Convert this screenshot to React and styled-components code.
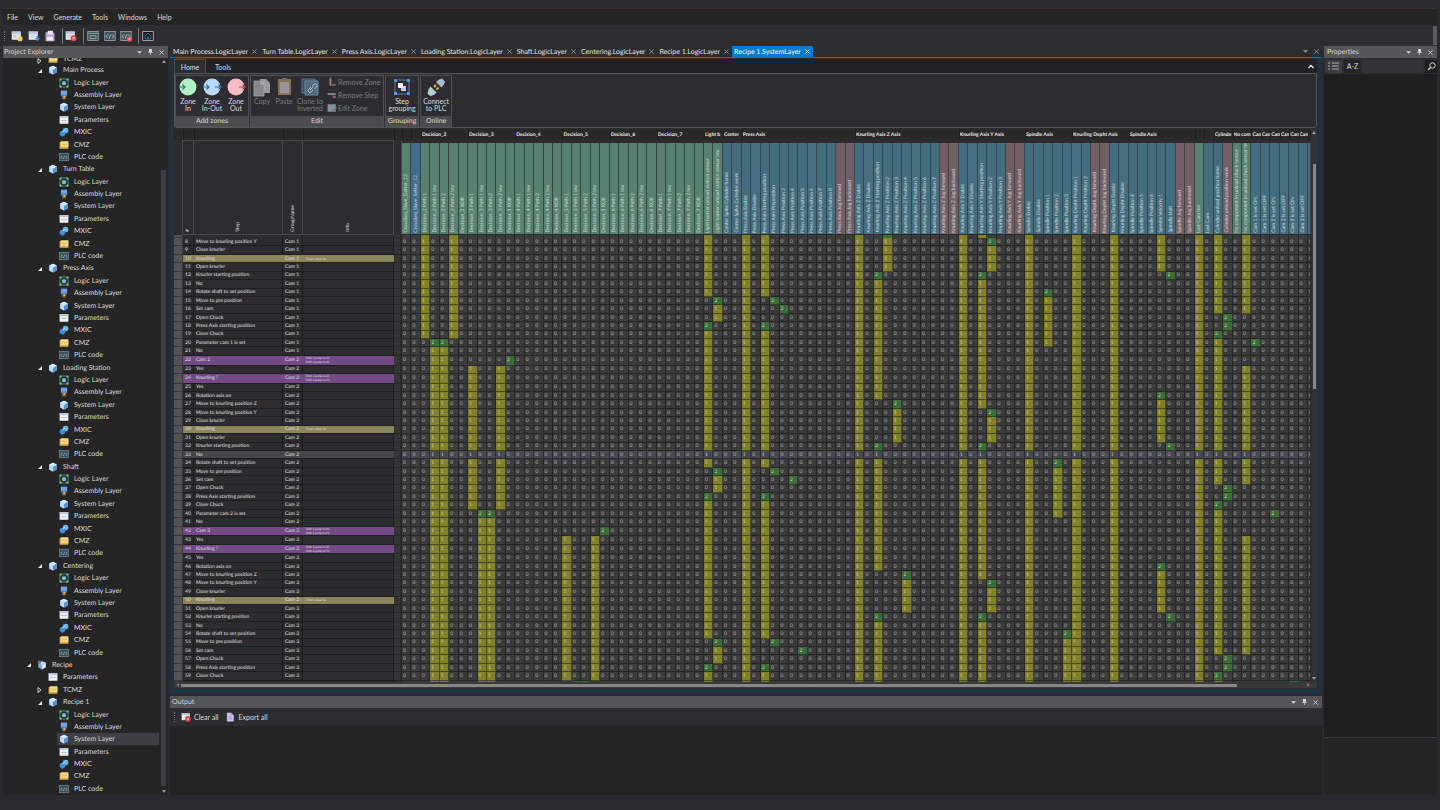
import React from "react";
import styled, { createGlobalStyle } from "styled-components";

const Global = createGlobalStyle`
  * { box-sizing: border-box; }
  html, body { margin: 0; background: #2a2b2e; }
  body {
    font-family: Lato, "Open Sans", sans-serif;
    font-size: 7px;
    line-height: 8px;
    color: #dcdcdc;
    text-rendering: geometricPrecision;
  }
  button { font: inherit; color: inherit; background: none; border: 0; padding: 0; margin: 0; }
  ul { list-style: none; margin: 0; padding: 0; }
  svg { display: block; flex: none; }
`;

/* ---------- data ---------- */

const GREEN = "#57826f";
const BLUE = "#436e82";
const MAUVE = "#725f66";

const decision = (n) =>
  ["Path 1", "Path 1 Inv", "Path 2", "Path 2 Inv", "XOR"].map((s) => [`Decision_${n} ${s}`, GREEN]);
const prefixed = (prefix, names, colour) => names.map((n) => [`${prefix} ${n}`, colour]);
const jog = (prefix, word) => prefixed(prefix, [`${word} forward`, `${word} backward`], MAUVE);

const columns = [
  ["CrossSeq_Slave_Getter_12", GREEN],
  ["CrossSeq_Slave_Setter_12", "#416b8c"],
  ...[2, 3, 4, 5, 6, 7].flatMap(decision),
  ["Light barrier unload station sensor", GREEN],
  ["Light barrier unload station sensor Inv", GREEN],
  ["Center Spike Cylinder home", BLUE],
  ["Center Spike Cylinder work", BLUE],
  ...prefixed("Press Axis", ["Enable", "Disable", "Starting position", "Preposition", "Position 3", "Position 4", "Position 5", "Position 6", "Position 7", "Position 8"], BLUE),
  ...jog("Press Axis", "Jog"),
  ...prefixed("Knurling Axis Z", ["Enable", "Disable", "Starting position", "Position 2", "Position 3", "Position 4", "Position 5", "Position 6", "Position 7"], BLUE),
  ...jog("Knurling Axis Z", "Jog"),
  ...prefixed("Knurling Axis Y", ["Enable", "Disable", "Starting position", "Position 2", "Position 3"], BLUE),
  ...jog("Knurling Axis Y", "Jog"),
  ...prefixed("Spindle", ["Enable", "Disable", "Position 1", "Position 2", "Position 3"], BLUE),
  ...prefixed("Knurling Depht", ["Position 1", "Position 2"], BLUE),
  ...jog("Knurling Depht", "Jog"),
  ...prefixed("Knurling Depht", ["Enable", "Disable"], BLUE),
  ...prefixed("Spindle", ["Position 4", "Position 5", "Position 6", "Velocity 1", "Halt"], BLUE),
  ...jog("Spindle", "Jog"),
  ["Last Cam Inv", GREEN],
  ["Last Cam", BLUE],
  ["Cylinder unload position home", BLUE],
  ["Cylinder unload position work", MAUVE],
  ["No component in unload chuck sensor", GREEN],
  ["No component in unload chuck sensor Inv", GREEN],
  ...[1, 2, 3].flatMap((n) => prefixed(`Cam ${n} is set`, ["ON", "OFF"], BLUE)),
  ["", BLUE],
];

const groups = [
  ["", 1], ["", 1],
  ["Decision_2", 5], ["Decision_3", 5], ["Decision_4", 5], ["Decision_5", 5], ["Decision_6", 5], ["Decision_7", 5],
  ["Light b", 2], ["Center", 2], ["Press Axis", 12], ["Knurling Axis Z Axis", 11], ["Knurling Axis Y Axis", 7],
  ["Spindle Axis", 5], ["Knurling Depht Axis", 6], ["Spindle Axis", 7], ["", 1], ["", 1],
  ["Cylinde", 2], ["No com", 2], ["Cam", 1], ["Cam", 1], ["Cam", 1], ["Cam", 1], ["Cam", 1], ["Cam", 1], ["", 1],
];

/* column -> ranges of steps in which the output stays on */
const held = {
  2: [[7, 19]], 3: [[21, 60]], 4: [[21, 60]], 5: [[7, 19]],
  7: [[23, 39]], 8: [[41, 60]], 9: [[41, 60]], 10: [[23, 39]],
  17: [[43, 59]], 20: [[43, 59]],
  32: [[7, 14], [19, 34], [39, 54], [59, 60]],
  33: [[16, 17], [36, 37], [56, 57]],
  36: [[7, 60]],
  38: [[7, 14], [19, 34], [39, 54], [59, 60]],
  48: [[7, 60]],
  50: [[13, 26], [33, 46], [53, 60]],
  51: [[8, 11]], 52: [[28, 31]], 53: [[48, 51]],
  59: [[7, 60]],
  61: [[7, 7], [13, 27], [33, 47], [53, 60]],
  62: [[9, 11], [29, 31], [49, 51]],
  66: [[7, 60]],
  68: [[15, 20]], 69: [[35, 40]], 70: [[55, 60]],
  71: [[7, 60]], 75: [[7, 60]],
  80: [[7, 11], [27, 31], [47, 51]],
  84: [[7, 60]],
  86: [[7, 16], [20, 36], [40, 56], [60, 60]],
  89: [[7, 16], [23, 36], [43, 56]],
};

/* column -> steps in which the output is triggered */
const fired = {
  3: [20], 4: [20], 8: [40], 9: [40], 11: [22], 18: [60], 19: [60], 21: [42],
  32: [18, 38, 58], 33: [15, 35, 55], 38: [18, 38, 58], 39: [15, 35, 55],
  40: [16], 41: [36], 42: [56],
  50: [12, 32, 52], 51: [7], 52: [27], 53: [47],
  61: [12, 32, 52], 62: [8, 28, 48],
  68: [14], 69: [34], 70: [54], 80: [26, 46], 81: [12, 32, 52],
  86: [19, 39, 59], 87: [17, 18, 37, 38, 57, 58],
  90: [20], 92: [40], 94: [60],
};

const valueAt = (col, step) => {
  if (fired[col]?.includes(step)) return 2;
  return held[col]?.some(([a, b]) => step >= a && step <= b) ? 1 : 0;
};

const cycle = [
  "No", "Cam", "Yes", "Knurling ?", "Yes", "Rotation axis on", "Move to knurling position Z",
  "Move to knurling position Y", "Close knurler", "Knurling", "Open knurler", "Knurler starting position",
  "No", "Rotate shaft to set position", "Move to pre position", "Set cam", "Open Chuck",
  "Press Axis starting position", "Close Chuck", "Parameter cam",
];
const jumps = {
  22: ["Path 1 jump to 23", "Path 2 jump to 41"],
  24: ["Path 1 jump to 25", "Path 2 jump to 33"],
  42: ["Path 1 jump to 43", "Path 2 jump to 61"],
  44: ["Path 1 jump to 45", "Path 2 jump to 53"],
};

const steps = Array.from({ length: 54 }, (_, i) => {
  const id = i + 7;
  const cam = Math.floor((id - 2) / 20) + 1;
  let name = cycle[(id - 1) % 20];
  if (name === "Cam") name = `Cam ${cam}`;
  if (name === "Parameter cam") name = `Parameter cam ${cam} is set`;
  const kind = jumps[id] ? "jump" : name === "Knurling" ? "timer" : id === 33 ? "selected" : "plain";
  const info = jumps[id] || (kind === "timer" ? ["Timer value: 1s"] : []);
  return { id, name, cam: `Cam ${cam}`, kind, info, cut: id === 7 ? 3 : id === 60 ? 1 : 0 };
});

/* ---------- icons ---------- */

const Svg = ({ size = 10, box = 16, children }) => (
  <svg width={size} height={size} viewBox={`0 0 ${box} ${box}`} fill="none" aria-hidden="true">{children}</svg>
);

const treeIcons = {
  cube: (
    <Svg>
      <path d="M8 1 14 4v8l-6 3-6-3V4z" fill="#9cc8f5" />
      <path d="M8 7.500 14 4v8l-6 3z" fill="#5b93d3" />
      <path d="M8 1 14 4 8 7.500 2 4z" fill="#d8ecff" />
      <path d="M2 4 8 7.500V15l-6-3z" fill="#b9dcfb" />
    </Svg>
  ),
  logic: (
    <Svg>
      <rect x="1.500" y="1.500" width="13" height="13" fill="#22362e" stroke="#5f9c78" strokeWidth="1.200" />
      <path d="M1 1h3v3H1zM12 1h3v3h-3zM1 12h3v3H1zM12 12h3v3h-3z" fill="#7fc498" />
      <rect x="5" y="5" width="6" height="6" rx="2" fill="#8fb8ee" />
    </Svg>
  ),
  assembly: (
    <Svg>
      <path d="M3 1h10v9H3z" fill="#6fa4ea" />
      <path d="M3 7h10v3H3z" fill="#4e80c8" />
      <path d="M5 10h6v5H5z" fill="#7d6244" />
      <path d="M7 9h3v4H7z" fill="#e0b060" />
    </Svg>
  ),
  params: (
    <Svg>
      <rect x="1" y="2" width="14" height="12" fill="#eef3fa" />
      <path d="M1 2h14v3H1z" fill="#b9c9e2" />
      <path d="M4 9h3M9 9h3" stroke="#8aa0c4" strokeWidth="1.500" />
    </Svg>
  ),
  mxic: (
    <Svg>
      <circle cx="10.500" cy="5.500" r="4.500" fill="#6db5f7" />
      <circle cx="5.500" cy="10.500" r="4.500" fill="#3f8fe0" />
      <path d="M6 8 9 5.500" stroke="#e6f3ff" strokeWidth="1.500" />
    </Svg>
  ),
  folder: (
    <Svg>
      <path d="M1 3h5l1 1h8v10H1z" fill="#dcae4c" />
      <path d="M3 2h12v9H3z" fill="#f6da8a" />
      <path d="M5 6l4 2 4-2" stroke="#c79c3e" />
    </Svg>
  ),
  code: (
    <Svg>
      <rect x="1" y="2" width="14" height="12" fill="#38505c" stroke="#7d95a3" />
      <path d="M5 6 3 8.500 5 11M11 6l2 2.500L11 11M9 6l-2 5" stroke="#b4c8d4" />
    </Svg>
  ),
  recipe: (
    <Svg>
      <path d="M8 2 14 4.500v7L8 15l-6-3.500v-7z" fill="#7fa9d8" />
      <path d="M8 8 14 4.500v7L8 15z" fill="#d5e4f2" />
      <path d="M8 2 14 4.500 8 8 5 6z" fill="#bcd8f4" />
      <path d="M2 1h4v5H2z" fill="#8d6f56" />
    </Svg>
  ),
};

const Win = ({ children }) => (
  <Svg size={12}>
    <rect x="1" y="2" width="12" height="11" fill="#e8edf4" />
    <path d="M1 2h12v3H1z" fill="#b7c6da" />
    <path d="M3 7h6M3 9.500h5" stroke="#a9b6c8" />
    {children}
  </Svg>
);
const Frame = ({ children }) => (
  <Svg size={12}>
    <rect x="1" y="2" width="14" height="12" fill="#42525b" stroke="#9cb0bb" />
    {children}
  </Svg>
);
const chev = <path d="M5 6 3 8.500 5 11M11 6l2 2.500L11 11M9 6l-2 5" stroke="#d8e6ee" />;

const toolbar = [
  { label: "New project", icon: <Win><circle cx="12" cy="11.500" r="3.500" fill="#f1cf6d" /></Win> },
  { label: "Open project", icon: <Win><path d="M11 8h3v3h2l-3.500 4L9 11h2z" fill="#3c95ea" /></Win> },
  { label: "Save", icon: (
    <Svg size={12}>
      <path d="M2 3h10l2 2v10H2z" fill="#bda5dc" />
      <path d="M5 1h7v5H5z" fill="#e9def7" />
      <path d="M4 9h8v5H4z" fill="#f2ebfb" />
    </Svg>
  ), end: true },
  { label: "Close project", icon: <Win><circle cx="11.500" cy="11" r="4" fill="#e0464b" /><path d="m10 9.500 3 3m0-3-3 3" stroke="#fff" /></Win>, end: true },
  { label: "Generate layer", icon: <Frame><path d="M1 4.500h14" stroke="#9cb0bb" /><path d="M4 7.500h8v4H4z" stroke="#9ec7a6" /></Frame> },
  { label: "Generate code", icon: <Frame>{chev}</Frame> },
  { label: "Remove code", icon: <Frame>{chev}<circle cx="12.500" cy="12" r="3.500" fill="#e0565b" /><path d="M11 12h3" stroke="#fff" /></Frame>, end: true },
  { label: "Start page", icon: (
    <Svg size={12}>
      <rect x="1" y="2" width="14" height="12" fill="#15181b" stroke="#c9c9c9" />
      <path d="m4 8 4-4 4 4v4H4z" stroke="#3f86ad" />
      <path d="M7 12V9h2v3" stroke="#3f86ad" />
    </Svg>
  ) },
];

const Zone = ({ fill, left, right }) => (
  <Svg size={20} box={20}>
    <circle cx="10" cy="10" r="8.500" fill={fill} />
    {left && <path d="M1 10h6M4.500 7.500 7 10 4.500 12.500" stroke={left === "in" ? "#2f7d55" : "#2d66a3"} strokeWidth="1.200" />}
    {right && <path d="M13 10h6M16.500 7.500 19 10l-2.500 2.500" stroke={right === "out" ? "#a33b45" : "#2d66a3"} strokeWidth="1.200" />}
  </Svg>
);

const CopyIcon = (
  <Svg size={20} box={20}>
    <path d="M8 2h6l4 4v10H8z" fill="#999b9f" />
    <path d="M2 4h7l3 3v12H2z" fill="#85878b" stroke="#a9abb0" strokeWidth=".8" />
    <path d="M9 4v3h3" stroke="#c0c2c6" strokeWidth=".8" />
  </Svg>
);
const PasteIcon = (
  <Svg size={20} box={20}>
    <path d="M4 2h13v16H4z" fill="#8f7148" />
    <path d="M6 5h9v11H6z" fill="#96979b" />
    <path d="M8 1h5v3H8z" fill="#6c6e72" />
  </Svg>
);
const CloneIcon = (
  <Svg size={20} box={20}>
    <path d="M2 2h13v14H2z" fill="#3d5063" stroke="#5b7791" />
    <path d="M5 4h13v14H5z" fill="#53687c" stroke="#6d8aa5" />
    <path d="m10 13 3.500-3.500M11 10l-2.300 2.300a1.800 1.800 0 0 0 2.600 2.600L13 13M12 9l1.800-1.600a1.800 1.800 0 0 1 2.600 2.600L14.500 12" stroke="#b2c2d0" />
  </Svg>
);
const GroupIcon = (
  <Svg size={20} box={20}>
    <rect x="3" y="3" width="14" height="14" stroke="#6d8fb8" strokeWidth=".8" />
    <path d="M2 2h3v3H2zM15 2h3v3h-3zM2 15h3v3H2zM15 15h3v3h-3z" fill="#4f93ef" />
    <path d="M9 9h5v5H9z" fill="#d2c3ec" />
    <path d="M6 6h5v5H6z" fill="#f4f7fb" />
  </Svg>
);
const PlugIcon = (
  <Svg size={20} box={20}>
    <path d="M10 5l3-2.500 3-1 3 3-1 3-2.500 3z" fill="#a9bccb" />
    <path d="M4.500 9.500l6 6-2.500 2.500-4 1-2.500-2.500 1-4z" fill="#b9cad7" />
    <path d="m8 10 2-2M10.500 12.500l2-2" stroke="#e6b93f" strokeWidth="1.800" />
  </Svg>
);
const RemoveZoneIcon = (
  <Svg>
    <path d="M4 1h3v13H4z" fill="#85878a" />
    <path d="M7 11h7v3H7z" fill="#94545a" />
  </Svg>
);
const RemoveStepIcon = (
  <Svg>
    <path d="M1 5h13v3H1z" fill="#85878a" />
    <path d="M9 9h5v4H9z" fill="#94545a" />
  </Svg>
);
const EditZoneIcon = (
  <Svg>
    <path d="M1 2h13v12H1z" fill="#8b9196" />
    <path d="M8 13l6-7 2 2-6 6z" fill="#5f7c98" />
  </Svg>
);

const Chevron = () => (
  <svg width="5" height="5" viewBox="0 0 6 6" aria-hidden="true"><path d="M0 1.500h6L3 4.500z" fill="currentColor" /></svg>
);
const Pin = () => (
  <svg width="5" height="6" viewBox="0 0 6 8" aria-hidden="true"><path d="M1 0h4v4h1v1H3.500v3h-1V5H0V4h1z" fill="currentColor" /></svg>
);
const Cross = () => (
  <svg width="5" height="5" viewBox="0 0 6 6" aria-hidden="true"><path d="m.5.5 5 5m0-5-5 5" stroke="currentColor" fill="none" /></svg>
);

/* ---------- shell ---------- */

const Page = styled.div`
  height: 100vh;
  display: flex;
  flex-direction: column;
  background: #2a2b2e;
  padding: 8px 3px 15px 3px;
`;
const MenuBar = styled.nav`
  flex: none;
  display: flex;
  align-items: center;
  gap: 10px;
  height: 17px;
  padding-left: 4px;
  background: #252526;
  border-top: 1px solid #3b2f2f;
`;
const ToolBar = styled.div`
  flex: none;
  display: flex;
  align-items: center;
  height: 21px;
  padding-left: 1px;
  background: #2d2d30;
`;
const Grip = styled.span`
  width: 2px;
  height: 10px;
  margin-right: 2px;
  border-left: 1px dotted #77787b;
`;
const ToolButton = styled.button`
  display: flex;
  align-items: center;
  justify-content: center;
  width: ${(p) => (p.$end ? 21 : 17)}px;
  height: 16px;
  padding-right: ${(p) => (p.$end ? 4 : 0)}px;
  border-right: ${(p) => (p.$end ? "1px solid #77787b" : "0")};
`;
const Spacer = styled.span`
  flex: 1;
`;
const Overflow = styled.span`
  width: 4px;
  height: 19px;
  background: #5a5b5d;
`;
const Main = styled.main`
  flex: 1;
  min-height: 0;
  display: grid;
  grid-template-columns: 165px minmax(0, 1fr) 113px;
  grid-template-rows: minmax(0, 1fr);
  gap: 2px;
`;
const Panel = styled.section`
  display: flex;
  flex-direction: column;
  min-width: 0;
  min-height: 0;
  background: #252526;
`;
const TitleBar = styled.header`
  flex: none;
  display: flex;
  align-items: center;
  gap: 6px;
  height: 12px;
  padding: 0 4px 0 ${(p) => p.$pad || 1}px;
  background: #555658;
  color: #d4d4d4;
`;
const Title = styled.h2`
  flex: 1;
  margin: 0;
  font-size: 7px;
  font-weight: 400;
`;

const PanelTitle = ({ children, pad }) => (
  <TitleBar $pad={pad}>
    <Title>{children}</Title>
    <button aria-label={`${children} options`}><Chevron /></button>
    <button aria-label={`Pin ${children}`}><Pin /></button>
    <button aria-label={`Close ${children}`}><Cross /></button>
  </TitleBar>
);

/* ---------- project explorer ---------- */

const TreeArea = styled.div`
  flex: 1;
  min-height: 0;
  display: flex;
`;
const TreeList = styled.ul`
  flex: 1;
  min-width: 0;
  display: flex;
  flex-direction: column;
`;
const TreeRow = styled.li`
  flex: ${(p) => (p.$cut ? "0 0 6px" : "1 1 0")};
  min-height: 0;
  overflow: hidden;
  display: flex;
  align-items: ${(p) => (p.$cut ? "flex-end" : "center")};
  padding-left: ${(p) => p.$depth * 11 + 12}px;
`;
const TreeItem = styled.span`
  display: flex;
  align-items: center;
  gap: 5px;
  flex: 1;
  align-self: ${(p) => (p.$cut ? "auto" : "stretch")};
  padding-left: 2px;
  background: ${(p) => (p.$selected ? "#3f3f46" : "none")};
`;
const Arrow = styled.span`
  display: flex;
  width: 9px;
`;
const ScrollColumn = styled.div`
  flex: none;
  display: flex;
  flex-direction: column;
  align-items: center;
  width: ${(p) => p.$w || 7}px;
  padding: 2px 0;
  color: #9a9a9a;
  background: ${(p) => p.$bg || "none"};
`;
const ExplorerThumb = styled.span`
  width: 5px;
  height: 84%;
  margin-bottom: 4px;
  background: #3e3e42;
`;
const Tip = ({ up }) => (
  <svg width="4" height="3" viewBox="0 0 4 3" aria-hidden="true"><path d={up ? "M0 3h4L2 0z" : "M0 0h4L2 3z"} fill="currentColor" /></svg>
);
const SideTip = ({ left }) => (
  <svg width="3" height="4" viewBox="0 0 3 4" aria-hidden="true"><path d={left ? "M3 0v4L0 2z" : "M0 0v4l3-2z"} fill="#77787a" /></svg>
);

const layers = [
  ["Logic Layer", "logic"], ["Assembly Layer", "assembly"], ["System Layer", "cube"], ["Parameters", "params"],
  ["MXIC", "mxic"], ["CMZ", "folder"], ["PLC code", "code"],
];
const withLayers = (name, selected) => [
  { name, icon: "cube", depth: 2, open: true },
  ...layers.map(([n, icon]) => ({ name: n, icon, depth: 3, selected: n === selected })),
];
const tree = [
  { name: "TCMZ", icon: "folder", depth: 2, open: false, cut: true },
  ...["Main Process", "Turn Table", "Press Axis", "Loading Station", "Shaft", "Centering"].flatMap((n) => withLayers(n)),
  { name: "Recipe", icon: "recipe", depth: 1, open: true },
  { name: "Parameters", icon: "params", depth: 2 },
  { name: "TCMZ", icon: "folder", depth: 2, open: false },
  ...withLayers("Recipe 1", "System Layer"),
];

const Explorer = () => (
  <Panel aria-label="Project Explorer">
    <PanelTitle>Project Explorer</PanelTitle>
    <TreeArea>
      <TreeList>
        {tree.map((t, i) => (
          <TreeRow key={i} $depth={t.depth} $cut={t.cut}>
            <Arrow>
              {t.open === true && <svg width="5" height="5" viewBox="0 0 5 5" aria-hidden="true"><path d="M5 1v4H1z" fill="#e8e8e8" /></svg>}
              {t.open === false && <svg width="5" height="6" viewBox="0 0 5 6" aria-hidden="true"><path d="M1 .5 4 3 1 5.500z" stroke="#d0d0d0" fill="none" /></svg>}
            </Arrow>
            <TreeItem $selected={t.selected} $cut={t.cut}>
              {treeIcons[t.icon]}
              {t.name}
            </TreeItem>
          </TreeRow>
        ))}
      </TreeList>
      <ScrollColumn $w={9}>
        <Tip up />
        <Spacer />
        <ExplorerThumb />
        <Tip />
      </ScrollColumn>
    </TreeArea>
  </Panel>
);

/* ---------- documents ---------- */

const Centre = styled.div`
  display: flex;
  flex-direction: column;
  min-width: 0;
  min-height: 0;
`;
const TabStrip = styled.div`
  flex: none;
  display: flex;
  align-items: stretch;
  height: 12px;
  padding-left: 1px;
  background: #2d2d30;
  border-bottom: 1px solid #0b73bb;
`;
const Tab = styled.div`
  display: flex;
  align-items: center;
  gap: 4px;
  padding: 0 3px 0 2px;
  color: ${(p) => (p.$active ? "#ffffff" : "#e4e4e4")};
  background: ${(p) => (p.$active ? "#007acc" : "none")};
  white-space: nowrap;
`;
const TabClose = styled.button`
  color: ${(p) => (p.$active ? "#ffffff" : "#a0a0a0")};
`;
const StripTools = styled.div`
  display: flex;
  align-items: center;
  gap: 6px;
  padding-right: 3px;
  color: #9a9a9a;
`;
const DocFrame = styled.div`
  flex: 1;
  min-height: 0;
  display: flex;
  flex-direction: column;
  padding: 1px 2px 2px 1px;
  background: #2d2d30;
  border: solid #1d3444;
  border-width: 0 3px 3px 3px;
`;
const RibbonTabs = styled.div`
  flex: none;
  display: flex;
  align-items: stretch;
  height: 14px;
  padding-right: 3px;
  background: #202124;
`;
const RibbonTab = styled.button`
  width: ${(p) => (p.$active ? 32 : 34)}px;
  border: 1px solid ${(p) => (p.$active ? "#4e4f52" : "transparent")};
  border-bottom: 0;
  background: ${(p) => (p.$active ? "#2d2d30" : "none")};
`;
const Ribbon = styled.div`
  flex: none;
  display: flex;
  gap: 1px;
  height: 55px;
  padding-top: 1px;
  border: 1px solid #555659;
  border-radius: 0 0 3px 3px;
  background: #2d2d31;
`;
const RibbonGroup = styled.section`
  display: flex;
  flex-direction: column;
  border: 1px solid #505154;
`;
const GroupBody = styled.div`
  flex: 1;
  display: flex;
  color: ${(p) => (p.$off ? "#7c7d80" : "#dcdcdc")};
`;
const GroupLabel = styled.h3`
  margin: 0;
  height: 10px;
  text-align: center;
  font-size: 7px;
  line-height: 10px;
  font-weight: 400;
  background: #4b4b4d;
`;
const BigButton = styled.button`
  display: flex;
  flex-direction: column;
  align-items: center;
  gap: 1px;
  width: ${(p) => p.$w}px;
  padding-top: 1px;
  line-height: 7px;
  white-space: pre-line;
`;
const SmallList = styled.div`
  display: flex;
  flex-direction: column;
  justify-content: space-between;
  padding: 1px 3px 3px 2px;
`;
const SmallButton = styled.button`
  display: flex;
  align-items: center;
  gap: 1px;
  white-space: nowrap;
`;

/* ---------- step matrix ---------- */

const GridArea = styled.div`
  flex: 1;
  min-height: 0;
  display: flex;
  margin-top: 1px;
`;
const Matrix = styled.table`
  flex: 1;
  min-width: 0;
  display: flex;
  flex-direction: column;
  overflow: hidden;
  font-size: 5px;
  line-height: 6px;
  background: #2f2f31;
`;
const MatrixHead = styled.thead`
  flex: none;
  display: block;
`;
const MatrixBody = styled.tbody`
  flex: 1;
  min-height: 0;
  display: flex;
  flex-direction: column;
`;
const template = "9px 11px 89px 20px 91px 8px repeat(96, minmax(0, 1fr)) 3px";
const GroupRow = styled.tr`
  display: grid;
  grid-template-columns: ${template};
  height: 11px;
  background: #292929;
`;
const GroupCell = styled.th`
  grid-column: span ${(p) => p.$span};
  min-width: 0;
  overflow: hidden;
  padding: 1px 0 0;
  border-left: 1px solid #1f1f1f;
  line-height: 10px;
  text-align: left;
  white-space: nowrap;
  color: #f0f0f0;
`;
const LabelRow = styled.tr`
  display: grid;
  grid-template-columns: ${template};
  height: 95px;
  background: #2c2c2f;
`;
const UpLabel = styled.span`
  writing-mode: vertical-rl;
  transform: rotate(180deg);
  white-space: nowrap;
`;
const StepHead = styled.th`
  display: flex;
  align-items: flex-end;
  justify-content: center;
  padding: 0 0 2px;
  font-weight: 400;
  border: solid #48484a;
  border-width: 1px 1px 1px 0;
`;
const Corner = styled.td`
  padding: 0;
  border-right: 1px solid #48484a;
`;
const OutputHead = styled.th`
  display: flex;
  align-items: flex-end;
  justify-content: center;
  min-width: 0;
  overflow: hidden;
  margin: 3px 0 1px;
  padding: 0 0 1px;
  font-weight: 400;
  color: #d4dcda;
  background: ${(p) => p.$c};
  border-right: 1px solid #3d4446;
`;
const rowBg = { plain: "#2c2c2f", selected: "#474749", timer: "#8b855c", jump: "#734a87" };
const StepRow = styled.tr`
  flex: ${(p) => (p.$cut ? `0 0 ${p.$cut}px` : p.$kind === "jump" ? "8 1 0" : "7 1 0")};
  min-height: 0;
  overflow: hidden;
  display: grid;
  grid-template-columns: ${template};
  grid-template-rows: minmax(0, 1fr);
`;
const RowMark = styled.th`
  padding: 0;
  background: #545456;
  border: solid #39393b;
  border-width: 0 1px 1px 0;
`;
const StepCell = styled.td`
  display: flex;
  flex-direction: column;
  justify-content: center;
  min-width: 0;
  overflow: hidden;
  padding: 0 0 0 2px;
  white-space: nowrap;
  color: #e2e2e2;
  background: ${(p) => rowBg[p.$kind]};
  border: solid #1e1e20;
  border-width: 0 ${(p) => (p.$kind === "plain" ? 1 : 0)}px ${(p) => (p.$cut ? 0 : 1)}px 0;
`;
const InfoCell = styled(StepCell)`
  padding-left: 3px;
  font-size: 3px;
  line-height: 4px;
`;
const GapCell = styled.td`
  padding: 0;
  background: #353536;
  border: solid #29292a;
  border-width: 0 2px 1px 0;
`;
const valueBg = ["#3b3b3b", "#83802a", "#3a6d39"];
const ValueCell = styled.td`
  display: flex;
  align-items: center;
  min-width: 0;
  overflow: hidden;
  padding: 0 0 0 1px;
  color: ${(p) => (p.$v ? "#d8d8b0" : "#bcbcbc")};
  background: ${(p) => (p.$selected ? "#474850" : valueBg[p.$v])};
  border: solid rgba(20, 20, 20, 0.5);
  border-width: 0 1px ${(p) => (p.$cut ? 0 : 1)}px 0;
`;
const MatrixThumb = styled.span`
  width: 3px;
  height: 41%;
  margin-top: 30px;
  background: #88888a;
`;
const HScroll = styled.div`
  flex: none;
  display: flex;
  align-items: center;
  gap: 2px;
  height: 6px;
  padding: 0 7px 0 2px;
  background: #39393a;
`;
const HThumb = styled.span`
  flex: 1;
  height: 3px;
  margin-right: 68px;
  background: #88888a;
`;

const StepMatrix = () => (
  <GridArea>
    <Matrix>
      <MatrixHead>
        <GroupRow>
          {[0, 1, 2, 3, 4, 5].map((k) => <GroupCell key={k} $span={1} />)}
          {groups.map(([name, span], i) => <GroupCell key={`g${i}`} $span={span} scope="colgroup">{name}</GroupCell>)}
        </GroupRow>
        <LabelRow>
          <Corner />
          {["#", "Step", "GroupName", "Info"].map((h) => (
            <StepHead key={h} scope="col"><UpLabel>{h}</UpLabel></StepHead>
          ))}
          <Corner />
          {columns.map(([name, c], i) => (
            <OutputHead key={i} $c={c} scope="col"><UpLabel>{name}</UpLabel></OutputHead>
          ))}
        </LabelRow>
      </MatrixHead>
      <MatrixBody>
        {steps.map((s) => (
          <StepRow key={s.id} $kind={s.kind} $cut={s.cut}>
            <RowMark scope="row" aria-label={`Step ${s.id}`} />
            <StepCell $kind={s.kind} $cut={s.cut}>{s.cut ? "" : s.id}</StepCell>
            <StepCell $kind={s.kind} $cut={s.cut}>{s.cut ? "" : s.name}</StepCell>
            <StepCell $kind={s.kind} $cut={s.cut}>{s.cut ? "" : s.cam}</StepCell>
            <InfoCell $kind={s.kind} $cut={s.cut}>
              {s.info.map((line) => <span key={line}>{line}</span>)}
            </InfoCell>
            <GapCell />
            {columns.map((_, c) => {
              const v = valueAt(c, s.id);
              return (
                <ValueCell key={c} $v={v} $cut={s.cut} $selected={s.kind === "selected"}>{s.cut ? "" : v}</ValueCell>
              );
            })}
          </StepRow>
        ))}
      </MatrixBody>
    </Matrix>
    <ScrollColumn $w={6} $bg="#323234">
      <Tip up />
      <MatrixThumb />
      <Spacer />
      <Tip />
    </ScrollColumn>
  </GridArea>
);

/* ---------- output and properties ---------- */

const OutputPanel = styled.section`
  flex: none;
  display: flex;
  flex-direction: column;
  margin-top: 3px;
  height: 99px;
  background: #232324;
`;
const PanelTools = styled.div`
  flex: none;
  display: flex;
  align-items: center;
  gap: 7px;
  height: 18px;
  padding-left: 4px;
  background: #2d2d30;
`;
const OutputGrip = styled(Grip)`
  margin-right: -2px;
`;
const TextButton = styled.button`
  display: flex;
  align-items: center;
  gap: 3px;
`;
const PropTools = styled.div`
  flex: none;
  display: flex;
  align-items: center;
  gap: 2px;
  height: 16px;
  padding-left: 1px;
  background: #2d2d30;
`;
const PropButton = styled.button`
  display: flex;
  align-items: center;
  justify-content: center;
  width: 17px;
  height: 13px;
  background: ${(p) => (p.$on ? "#3c3c3f" : "#252527")};
`;
const PropFilter = styled.input`
  flex: 1;
  min-width: 0;
  height: 13px;
  padding: 0 2px;
  border: 0;
  font: inherit;
  color: inherit;
  background: #343436;
`;
const PropSearch = styled.button`
  display: flex;
  align-items: center;
  justify-content: center;
  width: 12px;
  height: 13px;
  background: #1e1e1e;
`;
const PropBody = styled.div`
  flex: 1;
  background: #1e1e1f;
  border-bottom: 1px solid #39393b;
`;
const PropHint = styled.div`
  flex: none;
  height: 57px;
`;

const docTabs = [
  "Main Process.LogicLayer", "Turn Table.LogicLayer", "Press Axis.LogicLayer", "Loading Station.LogicLayer",
  "Shaft.LogicLayer", "Centering.LogicLayer", "Recipe 1.LogicLayer", "Recipe 1.SystemLayer",
];

export default function App() {
  return (
    <>
      <Global />
      <Page>
        <MenuBar aria-label="Main menu">
          {["File", "View", "Generate", "Tools", "Windows", "Help"].map((m) => <button key={m}>{m}</button>)}
        </MenuBar>
        <ToolBar>
          <Grip />
          {toolbar.map((t) => <ToolButton key={t.label} aria-label={t.label} $end={t.end}>{t.icon}</ToolButton>)}
          <Spacer />
          <Overflow />
        </ToolBar>
        <Main>
          <Explorer />
          <Centre>
            <TabStrip>
              {docTabs.map((t, i) => (
                <Tab key={t} $active={i === 7}>
                  {t}
                  <TabClose $active={i === 7} aria-label={`Close ${t}`}><Cross /></TabClose>
                </Tab>
              ))}
              <Spacer />
              <StripTools>
                <button aria-label="Open documents"><Chevron /></button>
                <button aria-label="Close document"><Cross /></button>
              </StripTools>
            </TabStrip>
            <DocFrame>
              <RibbonTabs>
                <RibbonTab $active>Home</RibbonTab>
                <RibbonTab>Tools</RibbonTab>
                <Spacer />
                <button aria-label="Collapse ribbon">
                  <svg width="6" height="5" viewBox="0 0 6 5" aria-hidden="true"><path d="M.5 4 3 1.500 5.500 4" stroke="#f0f0f0" strokeWidth="1.300" fill="none" /></svg>
                </button>
              </RibbonTabs>
              <Ribbon>
                <RibbonGroup>
                  <GroupBody>
                    <BigButton $w={24}><Zone fill="#b4f0c8" left="in" />{"Zone\nIn"}</BigButton>
                    <BigButton $w={24}><Zone fill="#b8dbfa" left="both" right="both" />{"Zone\nIn-Out"}</BigButton>
                    <BigButton $w={24}><Zone fill="#f8bcc2" right="out" />{"Zone\nOut"}</BigButton>
                  </GroupBody>
                  <GroupLabel>Add zones</GroupLabel>
                </RibbonGroup>
                <RibbonGroup>
                  <GroupBody $off>
                    <BigButton disabled $w={22}>{CopyIcon}Copy</BigButton>
                    <BigButton disabled $w={22}>{PasteIcon}Paste</BigButton>
                    <BigButton disabled $w={30}>{CloneIcon}{"Clone to\nInverted"}</BigButton>
                    <SmallList>
                      <SmallButton disabled>{RemoveZoneIcon}Remove Zone</SmallButton>
                      <SmallButton disabled>{RemoveStepIcon}Remove Step</SmallButton>
                      <SmallButton disabled>{EditZoneIcon}Edit Zone</SmallButton>
                    </SmallList>
                  </GroupBody>
                  <GroupLabel>Edit</GroupLabel>
                </RibbonGroup>
                <RibbonGroup>
                  <GroupBody><BigButton $w={32}>{GroupIcon}{"Step\ngrouping"}</BigButton></GroupBody>
                  <GroupLabel>Grouping</GroupLabel>
                </RibbonGroup>
                <RibbonGroup>
                  <GroupBody><BigButton $w={30}>{PlugIcon}{"Connect\nto PLC"}</BigButton></GroupBody>
                  <GroupLabel>Online</GroupLabel>
                </RibbonGroup>
              </Ribbon>
              <StepMatrix />
              <HScroll><SideTip left /><HThumb /><SideTip /></HScroll>
            </DocFrame>
            <OutputPanel aria-label="Output">
              <PanelTitle pad={2}>Output</PanelTitle>
              <PanelTools>
                <OutputGrip />
                <TextButton><Svg><path d="M1 2h13v11H1z" fill="#e8edf4" /><path d="M1 2h13v3H1z" fill="#b7c6da" /><circle cx="11" cy="11" r="4.500" fill="#d9484d" /><path d="m9.500 9.500 3 3m0-3-3 3" stroke="#fff" /></Svg>Clear all</TextButton>
                <TextButton><Svg><path d="M3 1h7l4 4v10H3z" fill="#cdbdea" /><path d="M10 1v4h4" fill="#9b84c9" /><path d="M5 8h6M5 11h6" stroke="#8a72bb" /></Svg>Export all</TextButton>
              </PanelTools>
            </OutputPanel>
          </Centre>
          <Panel aria-label="Properties">
            <PanelTitle pad={3}>Properties</PanelTitle>
            <PropTools>
              <PropButton $on aria-label="Categorised">
                <svg width="11" height="8" viewBox="0 0 11 8" aria-hidden="true"><path d="M0 1h2M0 4h2M0 7h2M4 1h7M4 4h7M4 7h7" stroke="#b0b0b0" /></svg>
              </PropButton>
              <PropButton>A-Z</PropButton>
              <PropFilter aria-label="Filter properties" />
              <PropSearch aria-label="Search">
                <svg width="9" height="9" viewBox="0 0 9 9" aria-hidden="true"><circle cx="5.500" cy="3.500" r="2.700" stroke="#d0d0d0" fill="none" /><path d="M3.500 5.500 1 8" stroke="#d0d0d0" strokeWidth="1.400" /></svg>
              </PropSearch>
            </PropTools>
            <PropBody />
            <PropHint />
          </Panel>
        </Main>
      </Page>
    </>
  );
}
